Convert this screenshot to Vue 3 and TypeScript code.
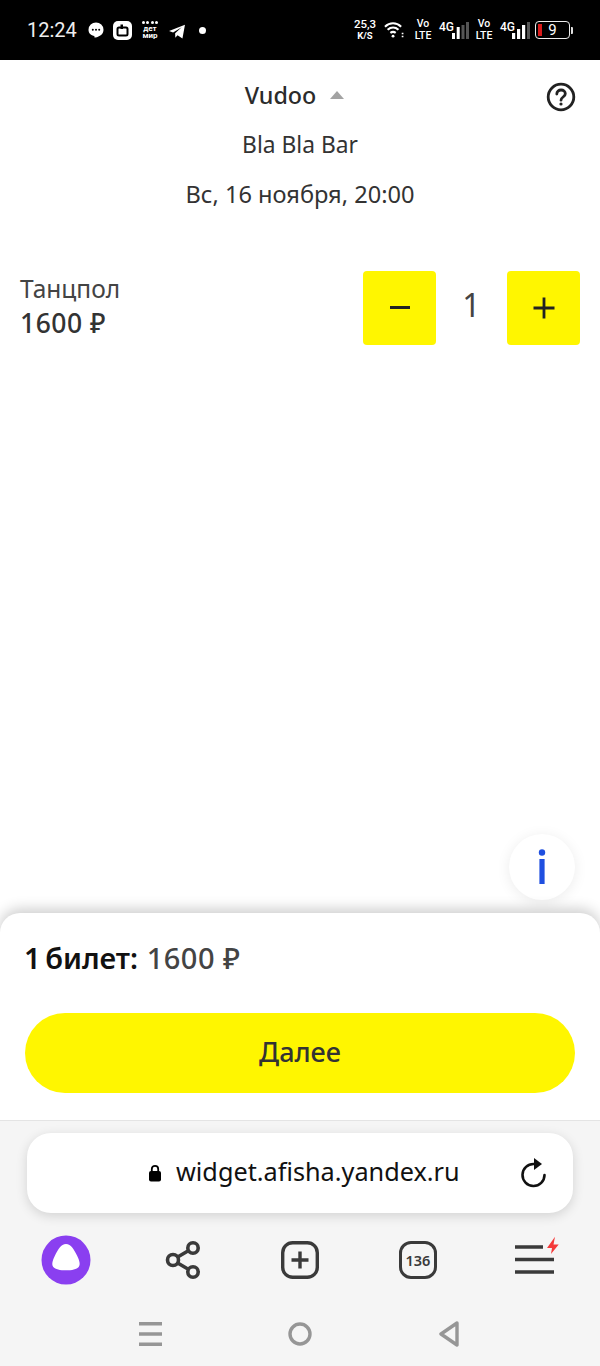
<template>
  <div class="screen">
    <header class="status-bar">
      <div class="status-left">
        <span class="clock">12:24</span>
        <svg class="ic-bubble" width="16" height="16" viewBox="0 0 16 16">
          <path d="M8 .5a7.500 7.200 0 0 1 7.500 7.200c0 4.300-3.600 7-8.200 7.800-.6.100-.9-.1-.9-.6v-.9C3 13.500.5 11.300.5 7.700A7.500 7.200 0 0 1 8 .5z" fill="#fff" />
          <circle cx="4.800" cy="7.700" r="1" fill="#000" />
          <circle cx="8" cy="7.700" r="1" fill="#000" />
          <circle cx="11.200" cy="7.700" r="1" fill="#000" />
        </svg>
        <svg class="ic-app" width="19" height="19" viewBox="0 0 19 19">
          <rect width="19" height="19" rx="5" fill="#fff" />
          <rect x="4.500" y="6.500" width="10" height="8" rx="1.500" fill="#fff" stroke="#000" stroke-width="2" />
          <rect x="7.500" y="3.500" width="2.500" height="4.500" fill="#000" />
        </svg>
        <div class="det-mir">
          <div class="dots"><i v-for="n in 4" :key="n"></i></div>
          <span>дет</span>
          <span>мир</span>
        </div>
        <svg class="ic-tg" width="18" height="15" viewBox="0 0 18 16">
          <path d="M.5 7.500 17.500.8 14.800 15.500 9.600 12l-2.400 2.600L7 9.800l7-6.300-9.200 5.600z" fill="#fff" />
        </svg>
        <span class="status-dot"></span>
      </div>
      <div class="status-right">
        <div class="speed"><span>25,3</span><span>K/S</span></div>
        <svg class="ic-wifi" width="20" height="18" viewBox="0 0 21 18" fill="none" stroke="#fff" stroke-width="2.200">
          <path d="M1 5.500c5-4.700 12-4.700 17 0" />
          <path d="M3.800 8.800c3.500-3 8-3 11.400 0" />
          <path d="M6.700 12c1.800-1.400 3.800-1.400 5.600 0" />
          <circle cx="9.500" cy="15.500" r="1.500" fill="#fff" stroke="none" />
          <path d="M19.500 12v1.500M19.500 15v1.500" stroke-width="1.800" />
        </svg>
        <div class="volte"><span>Vo</span><span>LTE</span></div>
        <div class="net">
          <span class="net-label">4G</span>
          <svg width="17" height="17" viewBox="0 0 17 17">
            <rect x="0" y="11" width="3" height="6" fill="#fff" />
            <rect x="4.700" y="5" width="3" height="12" fill="#fff" />
            <rect x="9.500" y="3" width="3" height="14" fill="#555" />
            <rect x="14" y="0" width="3" height="17" fill="#555" />
          </svg>
        </div>
        <div class="volte"><span>Vo</span><span>LTE</span></div>
        <div class="net">
          <span class="net-label">4G</span>
          <svg width="18" height="17" viewBox="0 0 18 17">
            <rect x="0" y="11" width="3.200" height="6" fill="#fff" />
            <rect x="5" y="7" width="3.200" height="10" fill="#fff" />
            <rect x="10" y="3" width="3.200" height="14" fill="#fff" />
            <rect x="15" y="0" width="3" height="17" fill="#555" />
          </svg>
        </div>
        <div class="battery">
          <div class="battery-body"><i></i><span>9</span></div>
          <b></b>
        </div>
      </div>
    </header>

    <main class="content">
      <div class="event-head">
        <div class="title-row">
          <span class="title">Vudoo</span>
          <span class="caret"></span>
        </div>
        <svg class="help" width="30" height="30" viewBox="0 0 30 30" fill="none" stroke="#222" stroke-width="2.800">
          <circle cx="15" cy="15" r="12.800" />
          <path d="M10.800 12c0-2.500 1.900-4 4.300-4s4.200 1.500 4.200 3.700c0 3.300-4.300 3.300-4.300 6.500" stroke-linecap="round" />
          <circle cx="15" cy="22" r="1.600" fill="#222" stroke="none" />
        </svg>
        <div class="venue">Bla Bla Bar</div>
        <div class="date">Вс, 16 ноября, 20:00</div>
      </div>

      <div class="ticket-row">
        <div class="ticket-info">
          <div class="ticket-name">Танцпол</div>
          <div class="ticket-price">1600 ₽</div>
        </div>
        <div class="counter">
          <button class="step">
            <svg width="22" height="22" viewBox="0 0 22 22"><rect x="1" y="9" width="20" height="3" fill="#222" /></svg>
          </button>
          <span class="count">1</span>
          <button class="step">
            <svg width="22" height="22" viewBox="0 0 22 22"><path d="M.5 11h21M11 .5v21" stroke="#222" stroke-width="2.800" /></svg>
          </button>
        </div>
      </div>

      <button class="info-btn">
        <svg width="10" height="36" viewBox="0 0 10 36">
          <circle cx="5" cy="3.500" r="3.200" fill="#1f4fe0" />
          <rect x="2.400" y="10" width="5.200" height="25" fill="#1f4fe0" />
        </svg>
      </button>
    </main>

    <section class="sheet">
      <div class="total"><b>1 билет:</b> <span>1600 ₽</span></div>
      <button class="next">Далее</button>
    </section>

    <footer class="browser">
      <div class="address">
        <div class="url">
          <svg width="14" height="18" viewBox="0 0 14 18">
            <rect x="1" y="7" width="12" height="10.500" rx="2" fill="#000" />
            <path d="M3.800 7.500V5a3.200 3.200 0 0 1 6.400 0v2.500" fill="none" stroke="#000" stroke-width="1.800" />
          </svg>
          <span>widget.afisha.yandex.ru</span>
        </div>
        <svg class="reload" width="26" height="30" viewBox="0 0 26 30" fill="none">
          <path d="M13 6A11 11 0 1 0 23.500 17" stroke="#111" stroke-width="2.600" stroke-linecap="round" />
          <path d="M13 0l8 6-8 6z" fill="#111" />
        </svg>
      </div>

      <nav class="toolbar">
        <svg width="50" height="50" viewBox="0 0 50 50">
          <circle cx="25" cy="25" r="24.500" fill="#8a3ff0" />
          <path d="M25 9c5 0 8 5.500 11 11.500 2.800 5.600 3.500 9 1.700 11.400-2 2.300-6.700 3.400-12.700 3.400s-10.700-1.100-12.700-3.400c-1.800-2.400-1.100-5.800 1.700-11.400C17 14.500 20 9 25 9z" fill="#fff" />
        </svg>
        <svg width="36" height="38" viewBox="0 0 36 38" fill="none" stroke="#3a3a3a" stroke-width="3.600">
          <circle cx="8" cy="19" r="5.500" />
          <circle cx="28" cy="7" r="5.200" />
          <circle cx="28" cy="31" r="5.200" />
          <path d="M12.700 16 23.300 9.800M12.700 22l10.600 6.200" />
        </svg>
        <svg width="38" height="38" viewBox="0 0 38 38" fill="none" stroke="#3a3a3a">
          <rect x="1.700" y="1.700" width="34.600" height="34.600" rx="10" stroke-width="3.400" />
          <path d="M19 10.500v17M10.500 19h17" stroke-width="3.400" />
        </svg>
        <div class="tabs">136</div>
        <svg class="menu-ic" width="48" height="50" viewBox="0 0 48 50">
          <path d="M4 12h28M4 24.500h39M4 37h39" stroke="#3a3a3a" stroke-width="3.600" />
          <path d="M44 1.700 36 13h5l-1 6 7.700-9.500h-5.200z" fill="#f43a3a" />
        </svg>
      </nav>

      <div class="nav-bar">
        <svg width="23" height="24" viewBox="0 0 23 24" fill="none" stroke="#969696" stroke-width="3.400">
          <path d="M0 1.700h23M0 12h23M0 22.300h23" />
        </svg>
        <svg width="24" height="24" viewBox="0 0 24 24" fill="none" stroke="#969696" stroke-width="3.400">
          <circle cx="12" cy="12" r="10" />
        </svg>
        <svg width="20" height="26" viewBox="0 0 20 26" fill="none" stroke="#969696" stroke-width="3.400" stroke-linejoin="round">
          <path d="M18 2 2 13l16 11z" />
        </svg>
      </div>
    </footer>
  </div>
</template>

<script setup lang="ts">
</script>

<style>
html, body { margin: 0; background: #fff; }
</style>

<style scoped>
.screen {
  width: 600px;
  height: 1366px;
  display: flex;
  flex-direction: column;
  overflow: hidden;
  font-family: "Noto Sans", "Open Sans", sans-serif;
  color: #222;
}

.status-bar {
  height: 60px;
  flex: none;
  background: #000;
  color: #fff;
  display: flex;
  align-items: center;
  justify-content: space-between;
  padding: 0 27px;
  font-family: Roboto, sans-serif;
}
.status-left { display: flex; align-items: center; }
.clock { font-size: 20px; color: #eee; width: 61px; }
.ic-bubble { margin-right: 9px; }
.ic-app { margin-right: 9px; }
.det-mir { width: 18px; margin-right: 9px; font-size: 8px; line-height: 7.500px; font-weight: 700; display: flex; flex-direction: column; align-items: center; }
.dots { display: flex; gap: 1.500px; margin-bottom: 1px; }
.dots i { width: 3px; height: 3px; background: #fff; border-radius: 50%; }
.ic-tg { margin-top: 3px; }
.status-dot { width: 7px; height: 7px; margin-left: 13px; background: #fff; border-radius: 50%; }

.status-right { display: flex; align-items: center; }
.speed { width: 22px; display: flex; flex-direction: column; align-items: center; font-size: 11.500px; line-height: 12px; font-weight: 500; margin-right: 8px; }
.speed span:last-child { font-size: 9.500px; font-weight: 700; }
.ic-wifi { margin-right: 11px; }
.volte { width: 16px; display: flex; flex-direction: column; align-items: center; font-size: 10.500px; line-height: 12.500px; margin-right: 8px; font-weight: 500; }
.net { position: relative; width: 30px; height: 17px; margin-right: 7px; display: flex; justify-content: flex-end; }
.net-label { position: absolute; left: 0; top: 0; font-size: 12px; line-height: 10px; font-weight: 500; }
.battery { display: flex; align-items: center; gap: 1px; margin-left: -2px; }
.battery-body { width: 35px; height: 18px; box-sizing: border-box; border: 1.500px solid #eee; border-radius: 4px; display: flex; align-items: center; justify-content: center; position: relative; font-size: 15px; }
.battery-body i { position: absolute; left: 2px; top: 2px; bottom: 2px; width: 4px; background: #d81a1a; }
.battery b { width: 2px; height: 7px; background: #ddd; border-radius: 0 1px 1px 0; }

.content { flex: 1; position: relative; background: #fff; min-height: 0; }

.event-head {
  position: relative;
  display: flex;
  flex-direction: column;
  align-items: center;
  padding-top: 20px;
}
.title-row { height: 30px; display: flex; align-items: center; gap: 14px; margin-right: 11px; }
.title { font-size: 23.300px; line-height: 30px; font-weight: 500; color: #2b2b2b; }
.caret { width: 0; height: 0; border: 7px solid transparent; border-top: 0; border-bottom: 8px solid #a3a3a3; }
.help { position: absolute; right: 24px; top: 22px; }
.venue { margin-top: 20px; font-size: 22.800px; line-height: 30px; color: #333; }
.date { margin-top: 19px; font-size: 23.600px; line-height: 30px; color: #333; }

.ticket-row {
  margin-top: 62px;
  padding: 0 20px;
  display: flex;
  align-items: center;
  justify-content: space-between;
}
.ticket-info { margin-top: -5px; }
.ticket-name { font-size: 24.500px; line-height: 34px; color: #444; }
.ticket-price { font-size: 26.500px; line-height: 34px; font-weight: 500; letter-spacing: 0.5px; color: #333; }
.counter { display: flex; align-items: center; }
.step {
  width: 73px;
  height: 74px;
  padding: 0;
  border: 0;
  border-radius: 4px;
  background: #fff600;
  display: flex;
  align-items: center;
  justify-content: center;
}
.count { width: 71px; text-align: center; font-size: 32px; line-height: 40px; color: #444; margin-top: -6px; }

.info-btn {
  position: absolute;
  right: 25px;
  bottom: 13px;
  width: 66px;
  height: 66px;
  padding: 0;
  border: 0;
  border-radius: 50%;
  background: #fff;
  box-shadow: 0 2px 14px rgba(0, 0, 0, 0.08);
  display: flex;
  align-items: center;
  justify-content: center;
}

.sheet {
  height: 207px;
  flex: none;
  box-sizing: border-box;
  position: relative;
  background: #fff;
  border-radius: 20px 20px 0 0;
  box-shadow: 0 -4px 14px rgba(0, 0, 0, 0.2);
  padding: 24px 24px 0 25px;
}
.total { font-size: 29px; line-height: 42px; color: #444; margin-left: -1px; }
.total b { color: #111; font-weight: 600; word-spacing: -3px; }
.total span { font-weight: 500; font-size: 29px; letter-spacing: 0.5px; margin-left: 1px; }
.next {
  display: block;
  width: 550px;
  height: 80px;
  margin-top: 34px;
  padding: 0 0 3px;
  border: 0;
  border-radius: 40px;
  background: #fff600;
  font-family: inherit;
  font-size: 27px;
  font-weight: 500;
  color: #333;
}

.browser {
  height: 246px;
  flex: none;
  box-sizing: border-box;
  background: #f5f5f5;
  border-top: 1px solid #e4e4e4;
  position: relative;
  padding: 12px 27px 0;
}
.address {
  height: 80px;
  border-radius: 24px;
  background: #fff;
  box-shadow: 0 3px 12px rgba(0, 0, 0, 0.14);
  position: relative;
  display: flex;
  align-items: center;
  justify-content: flex-end;
  padding-right: 26px;
}
.url {
  position: absolute;
  left: 121px;
  display: flex;
  align-items: center;
  gap: 14px;
  font-size: 25.250px;
  color: #111;
}
.url span { margin-top: -4px; }
.reload { flex: none; }

.toolbar {
  margin: 22px -20px 0;
  display: grid;
  grid-template-columns: repeat(5, 117.400px);
  justify-items: center;
  align-items: center;
  height: 50px;
}
.tabs {
  width: 38px;
  height: 38px;
  box-sizing: border-box;
  border: 3.400px solid #3a3a3a;
  border-radius: 12px;
  display: flex;
  align-items: center;
  justify-content: center;
  font-size: 14.500px;
  font-weight: 600;
  color: #3a3a3a;
}
.nav-bar {
  margin-top: 36px;
  padding: 0 114.500px 0 111.500px;
  display: flex;
  align-items: center;
  justify-content: space-between;
}
</style>
